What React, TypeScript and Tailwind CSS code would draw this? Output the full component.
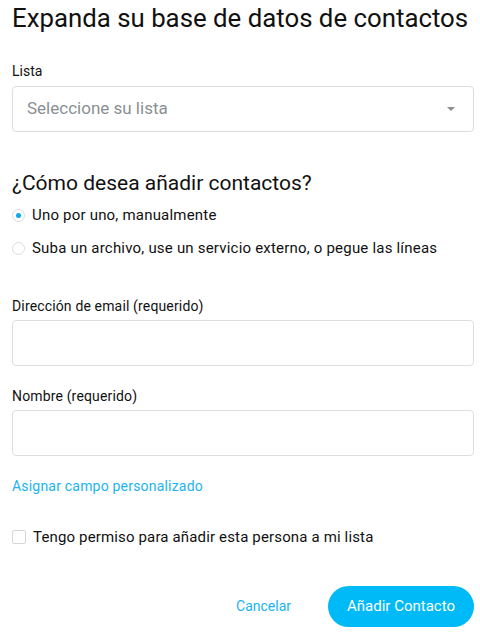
import { useState } from "react";

export default function App() {
  const [mode, setMode] = useState("manual");
  const [allowed, setAllowed] = useState(false);

  return (
    <div className="w-[480px] h-[633px] bg-white text-[#111] pl-3 pr-[6px] font-['Roboto',sans-serif]">
      <h1 className="text-[25.8px] leading-[34px] pt-[1px] whitespace-nowrap">
        Expanda su base de datos de contactos
      </h1>

      {/* Lista */}
      <label className="block mt-[28px] text-[14px] leading-4">Lista</label>
      <div className="mt-[7px] h-[46px] border border-[#dedede] rounded-[4px] flex items-center justify-between pl-[14px] pr-[18px]">
        <span className="text-[17px] text-[#8a8f94]">Seleccione su lista</span>
        <span className="w-0 h-0 border-l-[4px] border-r-[4px] border-t-[4px] border-l-transparent border-r-transparent border-t-[#8a8f94]" />
      </div>

      {/* Modo */}
      <h2 className="mt-[39px] text-[21px] leading-6">¿Cómo desea añadir contactos?</h2>
      <div className="mt-[12px] flex flex-col gap-[17px]">
        <button onClick={() => setMode("manual")} className="flex items-center gap-[7px] text-[15px] leading-4 tracking-[0.2px]">
          <span className="w-[13px] h-[13px] rounded-full border border-[#dcdcdc] flex items-center justify-center">
            {mode === "manual" && <span className="w-[5px] h-[5px] rounded-full bg-[#0aa8f0]" />}
          </span>
          Uno por uno, manualmente
        </button>
        <button onClick={() => setMode("bulk")} className="flex items-center gap-[7px] text-[15px] leading-4 tracking-[0.2px]">
          <span className="w-[13px] h-[13px] rounded-full border border-[#dcdcdc] flex items-center justify-center">
            {mode === "bulk" && <span className="w-[5px] h-[5px] rounded-full bg-[#0aa8f0]" />}
          </span>
          Suba un archivo, use un servicio externo, o pegue las líneas
        </button>
      </div>

      {/* Campos */}
      <label className="block mt-[42px] text-[14px] leading-4 tracking-[0.15px]">Dirección de email (requerido)</label>
      <input className="mt-[6px] w-full h-[46px] border border-[#dedede] rounded-[4px] outline-none px-3" />

      <label className="block mt-[22px] text-[14px] leading-4 tracking-[0.15px]">Nombre (requerido)</label>
      <input className="mt-[6px] w-full h-[46px] border border-[#dedede] rounded-[4px] outline-none px-3" />

      <a className="block mt-[22px] text-[14px] leading-4 tracking-[0.2px] text-[#1ab4f0]">Asignar campo personalizado</a>

      <label className="mt-[35px] flex items-center gap-[7px] text-[15px] leading-4 tracking-[0.15px]">
        <span
          onClick={() => setAllowed(!allowed)}
          className={`w-[14px] h-[14px] rounded-[2px] border ${allowed ? "bg-[#0aa8f0] border-[#0aa8f0]" : "border-[#d6d6d6]"}`}
        />
        Tengo permiso para añadir esta persona a mi lista
      </label>

      <div className="mt-[41px] flex items-center justify-end gap-[37px]">
        <button className="text-[14px] text-[#1ab4f0]">Cancelar</button>
        <button className="h-[41px] w-[146px] rounded-full bg-[#00b9f7] text-white text-[15px]">
          Añadir Contacto
        </button>
      </div>
    </div>
  );
}
